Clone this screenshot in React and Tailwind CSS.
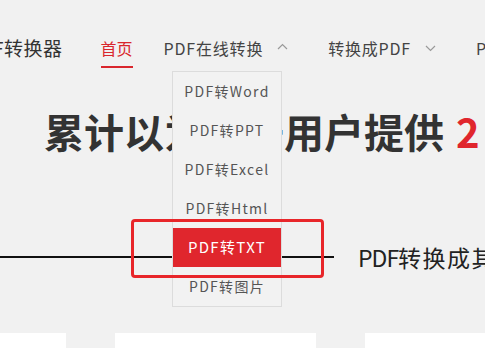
import React from "react";

const Chevron = ({ up }) => (
  <svg width="11" height="7" viewBox="0 0 11 7" className="shrink-0">
    <polyline
      points={up ? "1,6 5.5,1.5 10,6" : "1,1 5.5,5.5 10,1"}
      fill="none"
      stroke="#9a9a9a"
      strokeWidth="1.2"
    />
  </svg>
);

export default function App() {
  const items = ["PDF转Word", "PDF转PPT", "PDF转Excel", "PDF转Html", "PDF转TXT", "PDF转图片"];
  return (
    <div
      className="relative w-[485px] h-[348px] overflow-hidden bg-[#f1f1f1] text-[#333]"
      style={{ fontFamily: '"Noto Sans CJK SC", "Noto Sans", sans-serif' }}
    >
      {/* nav */}
      <div className="flex items-center h-[97px] pb-[1px] whitespace-nowrap">
        <div className="ml-[-33px] text-[19px] text-[#333] tracking-[0.5px] shrink-0">PDF转换器</div>
        <div className="ml-[38px] relative text-[16px] text-[#d9262d] shrink-0">
          首页
          <div className="absolute left-0 right-0 top-[30px] h-[2px] bg-[#d9262d]" />
        </div>
        <div className="ml-[31px] flex items-center text-[16px] text-[#444] tracking-[0.8px] shrink-0">
          PDF在线转换
          <span className="ml-[14px] mb-[4px]"><Chevron up /></span>
        </div>
        <div className="ml-[40px] flex items-center text-[16px] text-[#444] tracking-[0.8px] shrink-0">
          转换成PDF
          <span className="ml-[14px] mt-[1px]"><Chevron /></span>
        </div>
        <div className="ml-[40px] text-[16px] text-[#444] shrink-0">PDF</div>
      </div>

      {/* heading */}
      <div className="ml-[44px] mt-[4px] h-[60px] flex items-center whitespace-nowrap text-[40px] font-bold text-[#333] leading-none">
        <span>累计以为万千用户提供</span>
        <span className="ml-[12px] text-[#e0262d]">2</span>
      </div>

      {/* line row */}
      <div className="mt-[76px] flex items-center h-[40px] whitespace-nowrap">
        <div className="w-[334px] shrink-0 h-[1.5px] bg-[#111]" />
        <div className="ml-[24px] shrink-0 text-[23px] text-[#222] tracking-[1.5px]">
          <span className="tracking-[-1px]">PDF</span>转换成其他格式
        </div>
      </div>

      {/* bottom cards */}
      <div className="mt-[56px] flex h-[20px]">
        <div className="w-[66px] bg-white" />
        <div className="w-[49px]" />
        <div className="w-[201px] bg-white" />
        <div className="w-[49px]" />
        <div className="flex-1 bg-white" />
      </div>

      {/* dropdown */}
      <div className="absolute left-[172px] top-[71px] w-[110px] border border-[#dcdcdc] bg-[#f2f2f2]">
        {items.map((t) => (
          <div
            key={t}
            className={
              "h-[39px] flex items-center justify-center text-[14px] tracking-[1.3px] " +
              (t === "PDF转TXT" ? "bg-[#e0262d] text-white text-[15px]" : "text-[#555]")
            }
          >
            {t}
          </div>
        ))}
      </div>

      {/* highlight outline */}
      <div className="absolute left-[131px] top-[219px] w-[193px] h-[59px] border-[3px] border-[#e8262a] rounded-[4px]" />
    </div>
  );
}
